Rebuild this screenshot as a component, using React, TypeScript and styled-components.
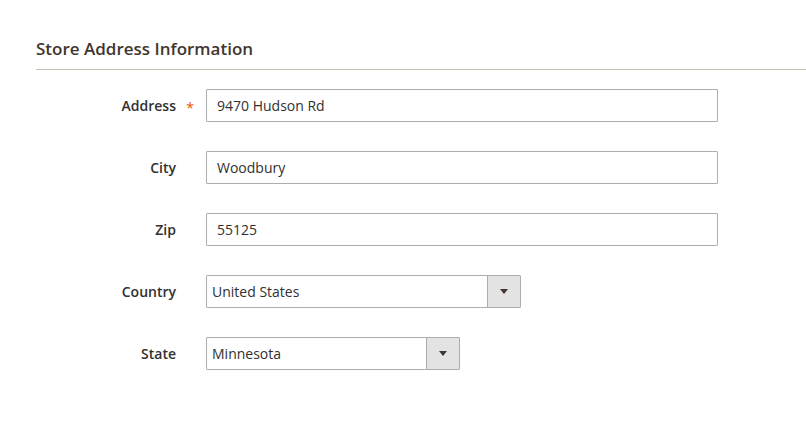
import React from "react";
import styled, { createGlobalStyle } from "styled-components";

const GlobalStyle = createGlobalStyle`
  html, body { margin: 0; padding: 0; background: #ffffff; }
  body { font-family: "Open Sans", "Liberation Sans", sans-serif; color: #303030; }
  * { box-sizing: border-box; }
`;

const Page = styled.div`
  padding: 37px 0 0 36px;
  width: 806px;
`;

const Fieldset = styled.fieldset`
  border: 0;
  margin: 0;
  padding: 0;
  min-width: 0;
`;

const Legend = styled.div`
  font-size: 17px;
  font-weight: 600;
  line-height: 24px;
  color: #41362f;
  padding-bottom: 8px;
  border-bottom: 1px solid #cac3b4;
  margin-bottom: 19px;
`;

const Fields = styled.div`
  display: flex;
  flex-direction: column;
  gap: 29px;
`;

const Row = styled.div`
  display: grid;
  grid-template-columns: 170px auto;
  align-items: center;
`;

const Label = styled.label<{ $required?: boolean }>`
  position: relative;
  text-align: right;
  padding-right: 30px;
  font-size: 14px;
  font-weight: 600;
  line-height: 20px;
  color: #303030;
  &::after {
    content: ${(p) => (p.$required ? '"*"' : "none")};
    position: absolute;
    right: 12px;
    top: 2px;
    color: #eb5202;
    font-size: 14px;
    font-weight: 400;
  }
`;

const TextInput = styled.input`
  width: 512px;
  height: 33px;
  border: 1px solid #adadad;
  border-radius: 1px;
  padding: 0 10px;
  font-family: "Open Sans", "Liberation Sans", sans-serif;
  font-size: 14px;
  color: #303030;
  background: #fff;
  outline: none;
`;

const SelectBox = styled.div<{ $width: number }>`
  width: ${(p) => p.$width}px;
  height: 33px;
  border: 1px solid #adadad;
  border-radius: 1px;
  display: flex;
  align-items: stretch;
  background: #fff;
`;

const SelectValue = styled.div`
  flex: 1;
  display: flex;
  align-items: center;
  padding-left: 5px;
  font-size: 14px;
  color: #303030;
`;

const SelectButton = styled.div`
  width: 33px;
  border-left: 1px solid #adadad;
  background: #e3e3e3;
  display: flex;
  align-items: center;
  justify-content: center;
`;

const Arrow = () => (
  <svg width="8" height="5" viewBox="0 0 8 5">
    <path d="M0 0 H8 L4 5 Z" fill="#41362f" />
  </svg>
);

export default function App() {
  return (
    <>
      <GlobalStyle />
      <Page>
        <Fieldset>
          <Legend>Store Address Information</Legend>
          <Fields>
            <Row>
              <Label $required>Address</Label>
              <TextInput defaultValue="9470 Hudson Rd" />
            </Row>
            <Row>
              <Label>City</Label>
              <TextInput defaultValue="Woodbury" />
            </Row>
            <Row>
              <Label>Zip</Label>
              <TextInput defaultValue="55125" />
            </Row>
            <Row>
              <Label>Country</Label>
              <SelectBox $width={315}>
                <SelectValue>United States</SelectValue>
                <SelectButton>
                  <Arrow />
                </SelectButton>
              </SelectBox>
            </Row>
            <Row>
              <Label>State</Label>
              <SelectBox $width={254}>
                <SelectValue>Minnesota</SelectValue>
                <SelectButton>
                  <Arrow />
                </SelectButton>
              </SelectBox>
            </Row>
          </Fields>
        </Fieldset>
      </Page>
    </>
  );
}
